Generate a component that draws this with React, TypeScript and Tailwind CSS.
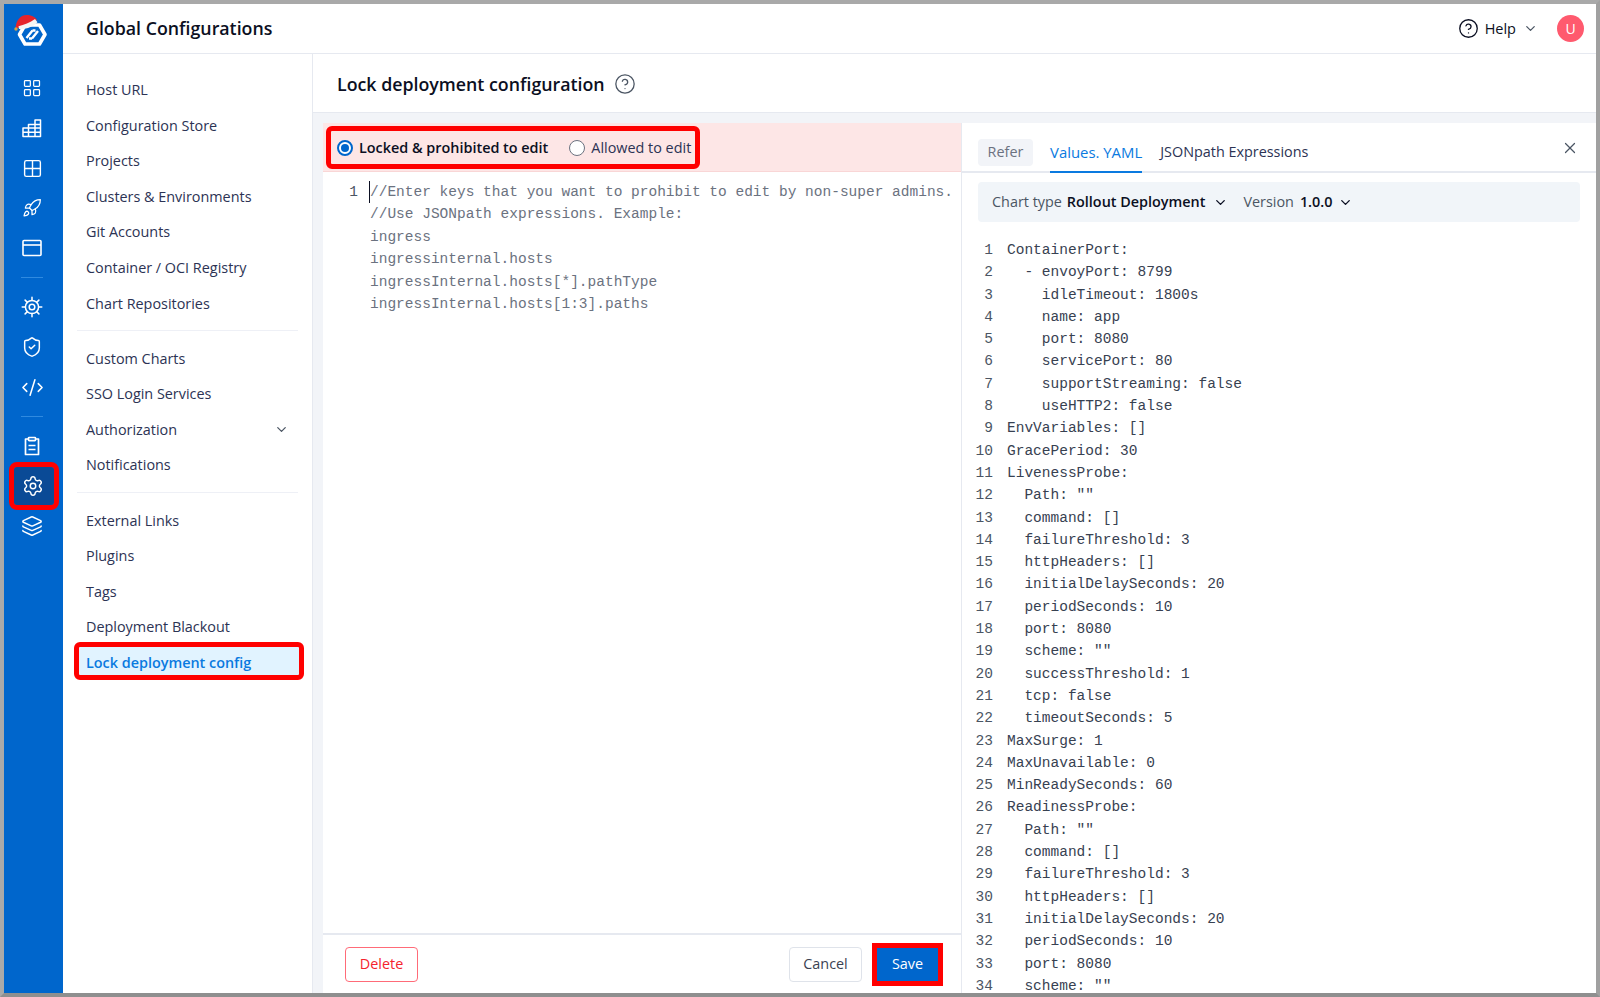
import { ChevronDown, X, Rocket, ShieldCheck, CodeXml, Settings, Layers, LayoutGrid, Grid2x2, CircleHelp } from "lucide-react"

const uiFont = "font-['Open_Sans',sans-serif]"

const yamlLines = [
  "ContainerPort:",
  "  - envoyPort: 8799",
  "    idleTimeout: 1800s",
  "    name: app",
  "    port: 8080",
  "    servicePort: 80",
  "    supportStreaming: false",
  "    useHTTP2: false",
  "EnvVariables: []",
  "GracePeriod: 30",
  "LivenessProbe:",
  '  Path: ""',
  "  command: []",
  "  failureThreshold: 3",
  "  httpHeaders: []",
  "  initialDelaySeconds: 20",
  "  periodSeconds: 10",
  "  port: 8080",
  '  scheme: ""',
  "  successThreshold: 1",
  "  tcp: false",
  "  timeoutSeconds: 5",
  "MaxSurge: 1",
  "MaxUnavailable: 0",
  "MinReadySeconds: 60",
  "ReadinessProbe:",
  '  Path: ""',
  "  command: []",
  "  failureThreshold: 3",
  "  httpHeaders: []",
  "  initialDelaySeconds: 20",
  "  periodSeconds: 10",
  "  port: 8080",
  '  scheme: ""',
]

const editorLines = [
  "//Enter keys that you want to prohibit to edit by non-super admins.",
  "//Use JSONpath expressions. Example:",
  "ingress",
  "ingressinternal.hosts",
  "ingressInternal.hosts[*].pathType",
  "ingressInternal.hosts[1:3].paths",
]

const menuGroups = [
  ["Host URL", "Configuration Store", "Projects", "Clusters & Environments", "Git Accounts", "Container / OCI Registry", "Chart Repositories"],
  ["Custom Charts", "SSO Login Services", "Authorization", "Notifications"],
  ["External Links", "Plugins", "Tags", "Deployment Blackout"],
]

function Logo() {
  return (
    <svg width="34" height="34" viewBox="0 0 34 34" className="block">
      <path d="M11 12h14.5l5.5 9.5-5.5 9.5H11L5.5 21.5z" fill="#0066cc" stroke="#fff" strokeWidth="3.6" strokeLinejoin="round" />
      <path d="M12.5 25l6-7.5M24 18l-6 7.5M18.5 17.5h3M15 25.5h3" fill="none" stroke="#fff" strokeWidth="2.4" />
      <path d="M1.5 15C2 8 6 2 12.5 2c4.5 0 8.5 1.5 10.5 5L9 15z" fill="#e5232b" />
      <path d="M5 16l-.5-2.8C10 12 16 9.5 21 6l2.5 3.2c-4 4-10.5 7.3-18.5 6.8z" fill="#f4f4f4" />
      <circle cx="2" cy="16" r="1.7" fill="#d9a441" />
    </svg>
  )
}

function StepsIcon() {
  return (
    <svg width="20" height="20" viewBox="0 0 20 20" fill="none" stroke="#fff" strokeWidth="1.5" strokeLinejoin="round">
      <path d="M1 18.5V10h5.5V6.5H13V2h5.5v16.5z" />
      <path d="M1 14.2h17.5M6.5 10h12M13 6.5h5.5M6.5 10v8.5M13 6.5v12" />
    </svg>
  )
}

function BrowserIcon() {
  return (
    <svg width="20" height="18" viewBox="0 0 20 18" fill="none" stroke="#fff" strokeWidth="1.6">
      <rect x="1" y="1.5" width="18" height="15" rx="1" />
      <path d="M1 6h18" />
    </svg>
  )
}

function HelmIcon() {
  return (
    <svg width="22" height="22" viewBox="0 0 22 22" fill="none" stroke="#fff" strokeWidth="1.5" strokeLinecap="round">
      <circle cx="11" cy="11" r="6.6" />
      <circle cx="11" cy="11" r="2.8" />
      <path d="M11 1.2v3.2M11 17.6v3.2M1.2 11h3.2M17.6 11h3.2M4.1 4.1l2.3 2.3M15.6 15.6l2.3 2.3M17.9 4.1l-2.3 2.3M6.4 15.6l-2.3 2.3" />
    </svg>
  )
}

function ClipboardIcon() {
  return (
    <svg width="20" height="20" viewBox="0 0 20 20" fill="none" stroke="#fff" strokeWidth="1.7" strokeLinejoin="round">
      <path d="M6.5 3H3.5v15.5h13V3h-3" />
      <rect x="6.5" y="1.5" width="7" height="3.2" rx="0.6" />
      <path d="M6.5 9.5h7M6.5 13.5h7" />
    </svg>
  )
}

function RailSlot({ children, active }: { children: React.ReactNode; active?: boolean }) {
  return (
    <div className="flex h-10 w-full items-center justify-center">
      {active ? (
        <div className="flex h-[38px] w-10 items-center justify-center rounded-[3px] bg-[#0a4a96] pr-[2px] outline-[5px] outline-[#ff0000]">
          {children}
        </div>
      ) : (
        <div className="flex w-full items-center justify-center pr-[3px]">{children}</div>
      )}
    </div>
  )
}

function RailDivider() {
  return (
    <div className="flex h-[19px] w-full items-center justify-center pr-[3px]">
      <div className="h-px w-[22px] bg-[#2f8ae0]" />
    </div>
  )
}

function Radio({ checked }: { checked?: boolean }) {
  return checked ? (
    <span className="flex h-4 w-4 shrink-0 items-center justify-center rounded-full border-2 border-[#0066cc] bg-white">
      <span className="h-2 w-2 rounded-full bg-[#0066cc]" />
    </span>
  ) : (
    <span className="block h-4 w-4 shrink-0 rounded-full border border-[#6b7280] bg-white" />
  )
}

export default function App() {
  return (
    <div className={`h-[997px] w-[1600px] overflow-hidden border-t-4 border-r-4 border-b-4 border-l-4 border-t-[#a9a9a9] border-r-[#a0a0a0] border-b-[#8f8f8f] border-l-[#a9a9a9] ${uiFont}`}>
      <div className="flex h-full w-full bg-white">
        {/* icon rail */}
        <aside className="flex w-[59px] shrink-0 flex-col items-center bg-[#0066cc]">
          <div className="flex h-[64px] w-full items-start pt-[9px] pl-[10px]">
            <Logo />
          </div>
          <RailSlot><LayoutGrid size={20} color="#fff" strokeWidth={1.5} /></RailSlot>
          <RailSlot><StepsIcon /></RailSlot>
          <RailSlot><Grid2x2 size={21} color="#fff" strokeWidth={1.6} /></RailSlot>
          <RailSlot><Rocket size={20} color="#fff" strokeWidth={1.5} /></RailSlot>
          <RailSlot><BrowserIcon /></RailSlot>
          <RailDivider />
          <RailSlot><HelmIcon /></RailSlot>
          <RailSlot><ShieldCheck size={22} color="#fff" strokeWidth={1.6} /></RailSlot>
          <RailSlot><CodeXml size={23} color="#fff" strokeWidth={1.6} /></RailSlot>
          <RailDivider />
          <RailSlot><ClipboardIcon /></RailSlot>
          <RailSlot active><Settings size={22} color="#fff" strokeWidth={1.6} /></RailSlot>
          <RailSlot><Layers size={22} color="#fff" strokeWidth={1.6} /></RailSlot>
        </aside>

        <div className="flex min-w-0 flex-1 flex-col">
          {/* top bar */}
          <header className="flex h-[50px] shrink-0 items-center justify-between border-b border-[#e6e9f0] pr-[12px] pl-[23px]">
            <h1 className="text-[17.8px] font-semibold text-[#0b0f22]">Global Configurations</h1>
            <div className="flex items-center">
              <CircleHelp size={21} color="#0b0f22" strokeWidth={1.5} />
              <span className="ml-[6px] text-[14.5px] font-medium text-[#0b0f22]">Help</span>
              <ChevronDown size={15} color="#4b5563" className="ml-[7px]" />
              <span className="ml-[19px] flex h-[27px] w-[27px] items-center justify-center rounded-full bg-[#ff5a6e] text-[14px] text-white">U</span>
            </div>
          </header>

          <div className="flex min-h-0 flex-1">
            {/* settings menu */}
            <nav className="w-[250px] shrink-0 border-r border-[#e6e9f0] pt-[18px] text-[14.4px] text-[#2c3354]">
              {menuGroups.map((group, i) => (
                <div key={i}>
                  {group.map((item) => (
                    <div key={item} className="flex h-[35.6px] items-center justify-between pr-[23px] pl-[23px]">
                      <span>{item}</span>
                      {item === "Authorization" && <ChevronDown size={15} color="#4b5563" />}
                    </div>
                  ))}
                  {i < 2 && <div className="mx-[14px] my-[9.25px] h-px bg-[#eef0f6]" />}
                </div>
              ))}
              <div className="mt-[2px] ml-[16px] flex h-[28px] w-[220px] items-center rounded-[1px] bg-[#e1f3ff] pt-[3px] pl-[7px] font-semibold text-[#0a7ae0] outline-[5px] outline-[#ff0000]">
                Lock deployment config
              </div>
            </nav>

            <main className="flex min-w-0 flex-1 flex-col bg-[#f2f4f8]">
              <div className="flex h-[59px] shrink-0 items-center border-b border-[#e6e9f0] bg-white pt-[2px] pl-[24px]">
                <h2 className="text-[17.8px] font-semibold text-[#0b0f22]">Lock deployment configuration</h2>
                <CircleHelp size={22} color="#4b5563" strokeWidth={1.4} className="ml-[9px]" />
              </div>

              <div className="mt-[10px] ml-[10px] flex min-h-0 flex-1">
                {/* editor panel */}
                <section className="flex w-[638px] shrink-0 flex-col bg-white">
                  <div className="flex h-[49px] shrink-0 items-center border-b border-[#f9d6d6] bg-[#fde6e6] pl-[8px]">
                    <div className="flex h-[33px] w-[364px] items-center rounded-[1px] pt-[1px] pl-[6px] text-[14.4px] text-[#0b0f22] outline-[5px] outline-[#ff0000]">
                      <Radio checked />
                      <span className="ml-[6px] font-semibold">Locked &amp; prohibited to edit</span>
                      <span className="ml-[21px]"><Radio /></span>
                      <span className="ml-[6px] text-[#2c3354]">Allowed to edit</span>
                    </div>
                  </div>
                  <div className="flex min-h-0 flex-1 pt-[9px] font-['Liberation_Mono',monospace] text-[14.5px] leading-[22.4px] text-[#6b7280]">
                    <div className="w-[46px] shrink-0 pr-[11px] text-right text-[#4b5563]">1</div>
                    <div className="border-l border-transparent">
                      {editorLines.map((line, i) => (
                        <div key={i} className={i === 0 ? "-ml-px border-l border-[#0b0f22] whitespace-pre" : "whitespace-pre"}>
                          {line}
                        </div>
                      ))}
                    </div>
                  </div>
                  <div className="flex h-[60px] shrink-0 items-center justify-between border-t-2 border-[#e6e9f0] pr-[23px] pl-[22px] text-[14.4px] font-medium">
                    <button className="flex h-[35px] w-[73px] items-center justify-center rounded-[4px] border border-[#ff6b78] text-[#f5222d]">Delete</button>
                    <div className="flex items-center gap-[15px]">
                      <button className="flex h-[35px] w-[73px] items-center justify-center rounded-[4px] border border-[#dfe3ea] text-[#3b4252]">Cancel</button>
                      <button className="flex h-[33px] w-[61px] items-center justify-center bg-[#0066cc] text-white outline-[5px] outline-[#ff0000]">Save</button>
                    </div>
                  </div>
                </section>

                {/* reference panel */}
                <section className="flex min-w-0 flex-1 flex-col overflow-hidden border-l border-[#e6e9f0] bg-white">
                  <div className="flex h-[50px] shrink-0 items-center justify-between border-b-2 border-[#e6e9f0] pr-[17px] pl-[16px]">
                    <div className="flex h-full items-center text-[14.4px]">
                      <span className="mt-[10px] flex h-[27px] w-[55px] items-center justify-center rounded-[4px] bg-[#f2f4f8] font-normal text-[#6b7280]">Refer</span>
                      <span className="relative ml-[17px] flex h-full items-center pt-[10px] text-[14.9px] font-medium text-[#0a7ae0]">
                        Values. YAML
                        <span className="absolute right-0 -bottom-[2px] left-0 h-[2px] bg-[#0a7ae0]" />
                      </span>
                      <span className="mt-[10px] ml-[18px] text-[#2c3354]">JSONpath Expressions</span>
                    </div>
                    <X size={18} color="#4b5563" strokeWidth={1.6} className="mt-[1px]" />
                  </div>

                  <div className="mt-[9px] mr-[16px] ml-[16px] flex h-[40px] shrink-0 items-center rounded-[4px] bg-[#f1f5f9] pl-[14px] text-[14.4px] text-[#4b5563]">
                    <span>Chart type</span>
                    <span className="ml-[5px] font-semibold text-[#0b0f22]">Rollout Deployment</span>
                    <ChevronDown size={15} color="#0b0f22" strokeWidth={2.2} className="ml-[8px]" />
                    <span className="ml-[15px]">Version</span>
                    <span className="ml-[6px] font-semibold text-[#0b0f22]">1.0.0</span>
                    <ChevronDown size={15} color="#0b0f22" strokeWidth={2.2} className="ml-[6px]" />
                  </div>

                  <div className="mt-[17px] font-['Liberation_Mono',monospace] text-[14.5px] leading-[22.3px] text-[#374151]">
                    {yamlLines.map((line, i) => (
                      <div key={i} className="flex whitespace-pre">
                        <span className="w-[31px] shrink-0 text-right text-[#4b5563]">{i + 1}</span>
                        <span className="ml-[14px]">{line}</span>
                      </div>
                    ))}
                  </div>
                </section>
              </div>
            </main>
          </div>
        </div>
      </div>
    </div>
  )
}
